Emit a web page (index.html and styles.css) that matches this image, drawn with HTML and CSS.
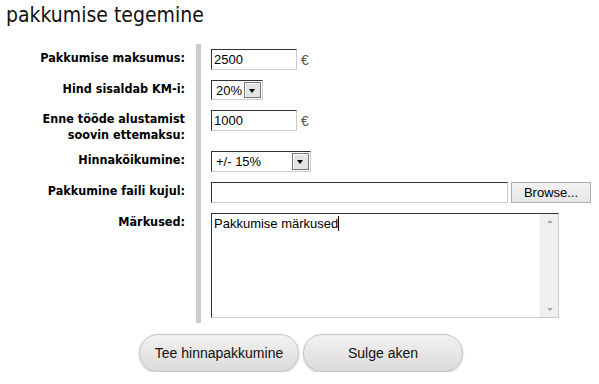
FILE: index.html
```html
<!DOCTYPE html>
<html lang="et">
<head>
    <meta charset="UTF-8">
    <meta name="viewport" content="width=device-width, initial-scale=1.0">
    <title>pakkumise tegemine</title>
    <link rel="stylesheet" href="styles.css">
</head>
<body>
    <h1 class="title">pakkumise tegemine</h1>

    <table class="offer-form">
        <tr>
            <th>Pakkumise maksumus:</th>
            <td>
                <div class="field">
                    <input class="text price" type="text" value="2500">
                    <span class="unit">€</span>
                </div>
            </td>
        </tr>
        <tr>
            <th>Hind sisaldab KM-i:</th>
            <td>
                <div class="field">
                    <span class="select vat">
                        <select>
                            <option>20%</option>
                            <option>0%</option>
                        </select>
                        <span class="drop"></span>
                    </span>
                </div>
            </td>
        </tr>
        <tr>
            <th>Enne tööde alustamist<br>soovin ettemaksu:</th>
            <td>
                <div class="field">
                    <input class="text price" type="text" value="1000">
                    <span class="unit">€</span>
                </div>
            </td>
        </tr>
        <tr>
            <th>Hinnaköikumine:</th>
            <td>
                <div class="field">
                    <span class="select range">
                        <select>
                            <option>+/- 15%</option>
                            <option>+/- 10%</option>
                            <option>+/- 5%</option>
                        </select>
                        <span class="drop"></span>
                    </span>
                </div>
            </td>
        </tr>
        <tr>
            <th>Pakkumine faili kujul:</th>
            <td>
                <div class="field">
                    <input class="text file-name" type="text" readonly>
                    <button class="browse" type="button">Browse...</button>
                </div>
            </td>
        </tr>
        <tr>
            <th>Märkused:</th>
            <td>
                <div class="notes">
                    <div class="notes-text">Pakkumise märkused<span class="caret"></span></div>
                    <div class="scrollbar">
                        <span class="arrow up"></span>
                        <span class="arrow down"></span>
                    </div>
                </div>
            </td>
        </tr>
    </table>

    <div class="actions">
        <button class="pill" type="button">Tee hinnapakkumine</button>
        <button class="pill" type="button">Sulge aken</button>
    </div>
</body>
</html>
```

FILE: styles.css
```css
body {
    margin: 0;
    padding: 0;
    background-color: #fff;
    color: #000;
    font-family: "Liberation Sans", Arial, sans-serif;
}
.title {
    margin: 2px 0 0 6px;
    font-family: "DejaVu Sans Condensed", "DejaVu Sans", sans-serif;
    font-weight: normal;
    font-size: 21px;
    line-height: 26px;
    color: #111;
}
.offer-form {
    margin-top: 16px;
    border-collapse: separate;
    border-spacing: 0;
}
.offer-form th {
    box-sizing: border-box;
    width: 196px;
    padding: 6px 11px 3px 0;
    text-align: right;
    vertical-align: top;
    font-family: "DejaVu Sans Condensed", "DejaVu Sans", sans-serif;
    font-weight: bold;
    font-size: 12.5px;
    line-height: 16px;
    color: #000;
}
.offer-form td {
    padding: 5px 0 5px 10px;
    vertical-align: top;
    border-left: 5px solid #ccc;
}
.field {
    display: flex;
    align-items: center;
    gap: 3px;
}
.text {
    box-sizing: border-box;
    height: 21px;
    margin: 0;
    padding: 0 2px;
    border: 1px solid;
    border-color: #333 #ccc #ccc #333;
    font-family: "Liberation Sans", Arial, sans-serif;
    font-size: 13px;
    color: #000;
    outline: none;
}
.price {
    width: 86px;
}
.file-name {
    width: 297px;
}
.unit {
    font-size: 14px;
    color: #555;
    margin-left: 1px;
}
.select {
    position: relative;
    display: inline-block;
    box-sizing: border-box;
    height: 20px;
    border: 1px solid;
    border-color: #333 #ccc #ccc #333;
    background: #fff;
}
.select.vat {
    width: 52px;
}
.select.range {
    width: 100px;
    height: 21px;
}
.select select {
    appearance: none;
    -webkit-appearance: none;
    box-sizing: border-box;
    width: 100%;
    height: 100%;
    margin: 0;
    padding: 0 0 0 4px;
    border: none;
    background: transparent;
    font-family: "Liberation Sans", Arial, sans-serif;
    font-size: 13px;
    color: #000;
    outline: none;
}
.drop {
    position: absolute;
    top: 1px;
    right: 1px;
    bottom: 1px;
    width: 17px;
    box-sizing: border-box;
    border: 1px solid #777;
    box-shadow: inset 1px 1px 0 #fff;
    background: #e3e3e3;
    pointer-events: none;
}
.drop::after {
    content: "";
    position: absolute;
    left: 4px;
    top: 6px;
    border-left: 3.5px solid transparent;
    border-right: 3.5px solid transparent;
    border-top: 4px solid #000;
}
.browse {
    box-sizing: border-box;
    width: 80px;
    height: 21px;
    margin: 0;
    padding: 0;
    border: 1px solid #adadad;
    background: linear-gradient(#f2f2f2, #e6e6e6);
    font-family: "Liberation Sans", Arial, sans-serif;
    font-size: 13px;
    color: #000;
}
.notes {
    display: flex;
    box-sizing: border-box;
    width: 348px;
    height: 105px;
    border: 1px solid;
    border-color: #333 #ccc #ccc #333;
}
.notes-text {
    flex: 1;
    padding: 2px 2px 0;
    font-size: 13px;
    line-height: 15px;
    color: #000;
}
.caret {
    display: inline-block;
    width: 1px;
    height: 15px;
    vertical-align: top;
    background: #000;
}
.scrollbar {
    position: relative;
    width: 17px;
    background: #f0f0f0;
    border-left: 1px solid #e8e8e8;
}
.arrow {
    position: absolute;
    left: 6px;
    border-left: 3px solid transparent;
    border-right: 3px solid transparent;
}
.arrow.up {
    top: 6px;
    border-bottom: 3px solid #a8a8a8;
}
.arrow.down {
    bottom: 6px;
    border-top: 3px solid #a8a8a8;
}
.actions {
    display: flex;
    justify-content: center;
    gap: 4px;
    margin: 11px 0 0 3px;
}
.pill {
    box-sizing: border-box;
    width: 160px;
    height: 38px;
    border: 1px solid #c4c4c4;
    border-radius: 19px;
    background: linear-gradient(#f3f2f2, #dcdada);
    box-shadow: 0 1px 2px rgba(0, 0, 0, 0.25);
    font-family: "Liberation Sans", Arial, sans-serif;
    font-size: 14px;
    color: #111;
    cursor: pointer;
}
```
